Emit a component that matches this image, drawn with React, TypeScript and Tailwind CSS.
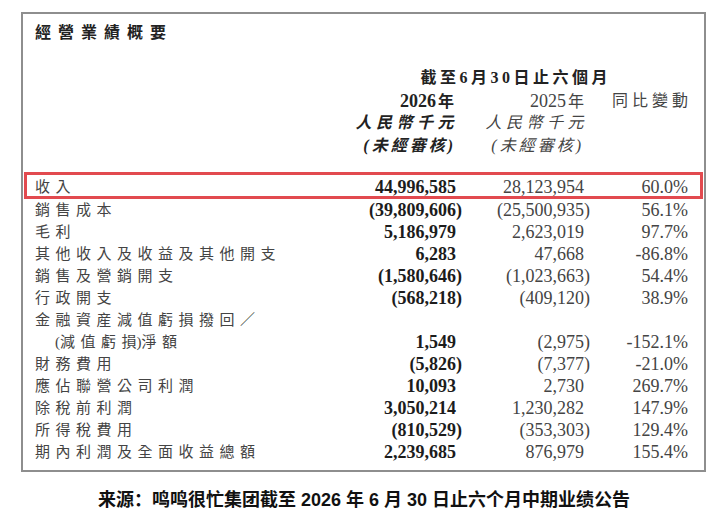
import React from 'react';

interface Row {
  label: React.ReactNode;
  key: string;
  a?: string;
  b?: string;
  c?: string;
  indent?: boolean;
}

const rows: Row[] = [
  { key: 'cost', label: '銷售成本', a: '(39,809,606)', b: '(25,500,935)', c: '56.1%' },
  { key: 'gross', label: '毛利', a: '5,186,979', b: '2,623,019', c: '97.7%' },
  { key: 'other', label: '其他收入及收益及其他開支', a: '6,283', b: '47,668', c: '-86.8%' },
  { key: 'selling', label: '銷售及營銷開支', a: '(1,580,646)', b: '(1,023,663)', c: '54.4%' },
  { key: 'admin', label: '行政開支', a: '(568,218)', b: '(409,120)', c: '38.9%' },
  { key: 'impair1', label: '金融資産減值虧損撥回／' },
  {
    key: 'impair2',
    label: (
      <>
        <span className="tracking-normal">(</span>減值虧<span className="tracking-normal">損)</span>淨額
      </>
    ),
    a: '1,549',
    b: '(2,975)',
    c: '-152.1%',
    indent: true,
  },
  { key: 'finance', label: '財務費用', a: '(5,826)', b: '(7,377)', c: '-21.0%' },
  { key: 'assoc', label: '應佔聯營公司利潤', a: '10,093', b: '2,730', c: '269.7%' },
  { key: 'pretax', label: '除稅前利潤', a: '3,050,214', b: '1,230,282', c: '147.9%' },
  { key: 'tax', label: '所得稅費用', a: '(810,529)', b: '(353,303)', c: '129.4%' },
  { key: 'total', label: '期內利潤及全面收益總額', a: '2,239,685', b: '876,979', c: '155.4%' },
];

// closing paren hangs past the column edge, like a printed report
function Num({ v }: { v?: string }) {
  if (!v) return null;
  const neg = v.startsWith('(');
  const body = neg ? v.slice(0, -1) : v;
  return (
    <div className="flex justify-end">
      <span>{body}</span>
      <span className="inline-block w-[6px] text-left">{neg ? ')' : ''}</span>
    </div>
  );
}

function DataRow({ row }: { row: Row }) {
  return (
    <div className="flex h-[22px] items-center pl-[11px] pr-[15px] leading-[22px]">
      <div className={`flex-1 text-[15px] tracking-[5.5px] text-[#444] ${row.indent ? 'pl-[20px]' : ''}`}>
        {row.label}
      </div>
      <div className="w-[130px] text-[18px] font-bold text-[#1c1c1c]">
        <Num v={row.a} />
      </div>
      <div className="w-[128px] text-[18px] text-[#444]">
        <Num v={row.b} />
      </div>
      <div className="w-[98px] text-right text-[18px] text-[#444]">{row.c}</div>
    </div>
  );
}

export default function App() {
  return (
    <div className="h-[522px] w-[728px] bg-white pt-[12px] font-['Liberation_Serif','Noto_Sans_CJK_TC',serif]">
      <div className="ml-[21px] w-[685px] border-2 border-[#8e8e8e] px-[1px] pb-[7px]">
        <div className="mt-[9px] h-[20px] pl-[11px] text-[16px] leading-[20px] font-bold tracking-[7px] text-[#222]">
          經營業績概要
        </div>

        {/* column headings */}
        <div className="mt-[24px] pr-[15px] pl-[11px] leading-[22.5px] text-[#333]">
          <div className="flex h-[22.5px] justify-end pr-[77px] text-[16px] font-bold tracking-[3.5px] text-[#222]">
            截至6月30日止六個月
          </div>
          <div className="flex h-[22.5px] text-[16px]">
            <div className="flex-1" />
            <div className="w-[130px] pr-[8px] text-right font-bold text-[#222]">
              <span className="text-[18px]">2026</span>
              <span className="pl-[2px]">年</span>
            </div>
            <div className="w-[128px] pr-[6px] text-right text-[#444]">
              <span className="text-[18px]">2025</span>
              <span className="pl-[2px]">年</span>
            </div>
            <div className="w-[98px] text-right tracking-[4px] text-[#444]">
              <span className="mr-[-4px]">同比變動</span>
            </div>
          </div>
          <div className="flex h-[22.5px] text-[16px] italic">
            <div className="flex-1" />
            <div className="w-[130px] pr-[4px] text-right font-bold tracking-[4.5px] text-[#222]">人民幣千元</div>
            <div className="w-[128px] pr-[2px] text-right tracking-[4.5px] text-[#444]">人民幣千元</div>
            <div className="w-[98px]" />
          </div>
          <div className="flex h-[22.5px] text-[16px] italic">
            <div className="flex-1" />
            <div className="w-[130px] pr-[6px] text-right font-bold tracking-[3px] text-[#222]">(未經審核)</div>
            <div className="w-[128px] pr-[6px] text-right tracking-[3px] text-[#444]">(未經審核)</div>
            <div className="w-[98px]" />
          </div>
        </div>

        {/* highlighted revenue row */}
        <div className="mt-[15px] flex h-[27px] items-center border-[3px] border-[#e24a4f] pt-[2px] pr-[12px] pl-[8px] leading-[22px]">
          <div className="flex-1 text-[15px] tracking-[5.5px] text-[#444]">收入</div>
          <div className="w-[130px] text-[18px] font-bold text-[#1c1c1c]">
            <Num v="44,996,585" />
          </div>
          <div className="w-[128px] text-[18px] text-[#444]">
            <Num v="28,123,954" />
          </div>
          <div className="w-[98px] text-right text-[18px] text-[#444]">60.0%</div>
        </div>

        {rows.map((row) => (
          <DataRow key={row.key} row={row} />
        ))}
      </div>

      <div className="mt-[16px] text-center font-['Liberation_Sans','Noto_Sans_CJK_SC',sans-serif] text-[18px] leading-[24px] font-bold text-[#111]">
        来源：鸣鸣很忙集团截至 2026 年 6 月 30 日止六个月中期业绩公告
      </div>
    </div>
  );
}
